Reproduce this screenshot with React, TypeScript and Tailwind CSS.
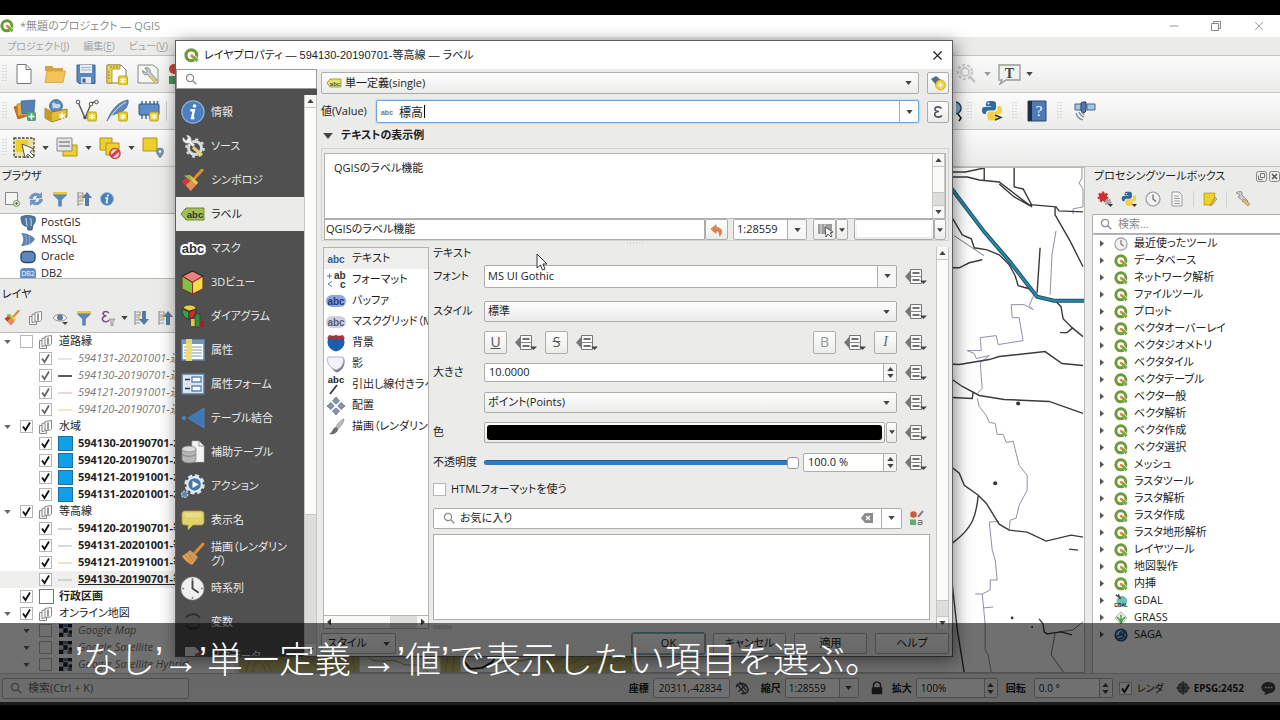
import { ReactNode, useState } from "react"
import { Minus, X } from "lucide-react"
import clsx from "clsx"

type Nodo = {
    nombre: string
    nivel: 0 | 1
    abierto?: boolean
    marcado?: boolean
    tenue?: boolean
    negrita?: boolean
    activo?: boolean
    icono: ReactNode
}

const Svg = ({ children, className = "size-4", box = "0 0 16 16" }: { children: ReactNode, className?: string, box?: string }) =>
    <svg viewBox={box} className={clsx("shrink-0", className)} fill="none" aria-hidden="true">{children}</svg>

const Flecha = ({ className = "w-[7px] h-[4px]", color = "#444" }: { className?: string, color?: string }) =>
    <Svg box="0 0 8 5" className={className}><path d="M0 0h8L4 5z" fill={color} /></Svg>

const FlechaArriba = ({ className = "w-[7px] h-[4px]" }: { className?: string }) =>
    <Svg box="0 0 8 5" className={className}><path d="M0 5h8L4 0z" fill="#444" /></Svg>

const Asa = () => <Svg box="0 0 5 18" className="w-[5px] h-[18px]">
    <path d="M1 0v18M4 0v18" stroke="#b9bab9" strokeDasharray="1 2" />
</Svg>

const Lupa = ({ className = "size-3" }: { className?: string }) => <Svg box="0 0 12 12" className={className}>
    <circle cx="5" cy="5" r="3.6" stroke="#888" strokeWidth="1.2" />
    <path d="M7.7 7.7L11.3 11.3" stroke="#888" strokeWidth="1.3" />
</Svg>

const LogoQ = ({ className = "size-[14px]" }: { className?: string }) => <Svg box="0 0 16 16" className={className}>
    <circle cx="7.8" cy="7.8" r="5.7" stroke="#6d9a3a" strokeWidth="3.5" />
    <path d="M7 7h4l5 5v4h-3z" fill="#f4f7ef" />
    <path d="M8 8l3.2.3 4.3 4.3-2.2 2.4-5-5z" fill="#7ba843" />
    <circle cx="8.3" cy="8.3" r="1.7" fill="#e5883c" />
</Svg>

const Reloj = ({ className }: { className?: string }) => <Svg className={className}>
    <circle cx="8" cy="8" r="7" fill="#f1f1f1" stroke="#999" strokeWidth="1.2" />
    <path d="M8 3.5V8l3 2.5" stroke="#666" strokeWidth="1.2" />
</Svg>

const Embudo = () => <Svg>
    <path d="M1 1h14v3L9.8 9v6.5H6.2V9L1 4z" fill="#5f87b5" />
    <path d="M1 1h14v2.5H1z" fill="#e9c940" />
</Svg>

const Info = ({ className }: { className?: string }) => <Svg className={className}>
    <circle cx="8" cy="8" r="7.4" fill="#4a7fc0" stroke="#8fb2dd" strokeWidth=".8" />
    <circle cx="9" cy="4" r="1.2" fill="#fff" />
    <path d="M6.2 6.8h2.4L7.4 12h1.5" stroke="#fff" strokeWidth="1.6" />
</Svg>

const Python = ({ children, className }: { children?: ReactNode, className?: string }) => <Svg box="0 0 22 22" className={className}>
    <path d="M5 7V3.5C5 1.5 7 1 10 1s5 .5 5 2.5V8c0 1.6-1 2.5-2.5 2.5h-5C6 10.5 5 11.5 5 13v1H3.5C1.5 14 1 12 1 10s.5-3 2.5-3H10V6.3H5z" fill="#2f6a9c" />
    <path d="M16.5 6H18c2 0 3 1.5 3 4s-.5 4-3 4h-6v.7h4.5V18c0 2-2.500 2.500-5 2.500S6.500 20 6.500 18v-4c0-1.600 1-2.500 2.500-2.500h5c1.500 0 2.500-1 2.500-2.500z" fill="#f6cf46" />
    <circle cx="7.5" cy="3.6" r="1" fill="#fff" />
    {children}
</Svg>

const Brocha = ({ className }: { className?: string }) => <Svg box="0 0 24 24" className={className}>
    <path d="M22 1l-8 9" stroke="#dd8b35" strokeWidth="3.2" strokeLinecap="round" />
    <path d="M9 6l9 8-2.500 3-9.500-8z" fill="#e9c443" />
    <path d="M6 9l9.500 8-5 6L1 13z" fill="#d8483a" />
    <path d="M6 9l-5 4 4 4 5-4.500z" fill="#cf3730" />
    <path d="M10 12.500L5 17l5 6 5.500-6z" fill="#e88d5a" />
    <path d="M9 6L3 7l3 2 7 6z" fill="#8db646" />
</Svg>

const Estrella = () => <g>
    <rect x="12.5" y="13" width="9" height="9" rx="1.5" fill="#e8c930" stroke="#b89b1c" strokeWidth=".8" />
    <path d="M17 14.500v6M14.200 16l5.600 3M19.800 16l-5.600 3" stroke="#fff" strokeWidth="1.3" />
</g>

// ツールバー(ファイル)
const iconosArchivo = [
    <Svg box="0 0 22 22" className="size-[22px]"><path d="M4 1.500h9l5 5v14H4z" fill="#fff" stroke="#777" /><path d="M13 1.500v5h5" stroke="#777" /></Svg>,
    <Svg box="0 0 22 22" className="size-[22px]"><path d="M1 3h7l2 2h9v3H1z" fill="#d9a33c" /><path d="M3 8h18.500l-2.500 11.500H1z" fill="#f2c45a" stroke="#d6a03a" strokeWidth=".8" /></Svg>,
    <Svg box="0 0 22 22" className="size-[22px]"><path d="M2 2h18v18.500H4L2 18.500z" fill="#5b86bd" stroke="#3c6190" /><path d="M5 2h12v8H5z" fill="#e8edf3" /><path d="M6 4.500h10M6 7h10" stroke="#a9b5c4" /><path d="M6 14h10v6.500H6z" fill="#dfe6ee" /><path d="M7.500 15.500h3v4h-3z" fill="#3c6190" /></Svg>,
    <Svg box="0 0 22 22" className="size-[22px]"><path d="M1 2h14l5 5v13H1z" fill="#fff" stroke="#777" /><path d="M1 2h13v4H6v14H1z" fill="#f0d34e" stroke="#a58e2a" strokeWidth=".8" /><path d="M5 3v2M8 3v2M11 3v2M2 9h2M2 12h2M2 15h2" stroke="#7c6a1e" strokeWidth=".8" /><Estrella /></Svg>,
    <Svg box="0 0 22 22" className="size-[22px]"><path d="M1 2h15l5 4v14H1z" fill="#f5f6f6" stroke="#888" /><path d="M8 5c3-1 6 1 5 4l7 8-2.500 2.500-7-8c-3 1-5-1-5-4l3 2 2-1z" fill="#c9ced2" stroke="#6c757c" strokeWidth=".8" /><path d="M14 13l5.500 5-2 2-5-5.500z" fill="#e5c94b" /></Svg>,
]

// ツールバー(データソース)
const iconosDatos = [
    <Svg box="0 0 24 24" className="size-[24px]"><path d="M1 8l9-3 4 12-9 3z" fill="#d0702d" stroke="#9d4f1b" strokeWidth=".7" /><path d="M4 5l11-1 1 12-11 1z" fill="#e6b23c" stroke="#a67d22" strokeWidth=".7" /><path d="M8 2l14-1-1 13-12 1z" fill="#5580b3" stroke="#39608f" strokeWidth=".7" /><rect x="14" y="13" width="9" height="9" rx="1.5" fill="#55a477" /><path d="M18.500 14.500v6M15.500 17.500h6" stroke="#fff" strokeWidth="1.5" /></Svg>,
    <Svg box="0 0 24 24" className="size-[24px]"><circle cx="12" cy="7" r="6.3" fill="#5b8fc4" stroke="#365b84" /><path d="M8 4c3-2 3 2 6 1s3 3 1 4-5-1-6 1" fill="#c5dbe9" /><path d="M1 9l7 4 15-3v8l-15 5-7-4z" fill="#e5bf3b" stroke="#8b6d16" strokeWidth=".8" /><path d="M1 9l7 4v10l-7-4z" fill="#c59b25" /><path d="M18 13.500v7M15 15.300l6 3.500M21 15.300l-6 3.500" stroke="#fff" strokeWidth="1.3" /></Svg>,
    <Svg box="0 0 24 24" className="size-[24px]"><path d="M3 3l7 16L16 5c1-2 3-2 5-2" stroke="#555" strokeWidth="1.4" /><circle cx="3" cy="3" r="1.8" fill="#fff" stroke="#555" /><circle cx="16" cy="5" r="1.8" fill="#fff" stroke="#555" /><circle cx="21.5" cy="3" r="1.8" fill="#fff" stroke="#555" /><circle cx="10" cy="18.5" r="1.8" fill="#555" /><Estrella /></Svg>,
    <Svg box="0 0 24 24" className="size-[24px]"><path d="M1 22C5 12 11 3 22 1c1 5-3 11-9 13-3 1-6 1-8 3z" fill="#6288b8" stroke="#43658f" strokeWidth=".8" /><path d="M2 22C7 13 13 7 20 3" stroke="#dbe6f2" /><Estrella /></Svg>,
    <Svg box="0 0 24 24" className="size-[24px]"><path d="M5 2v18M9 2v18M13 2v18M17 2v18M20.500 2v16" stroke="#56779f" strokeWidth="1.6" /><rect x="2" y="5" width="20" height="11" rx="1" fill="#5a8cc9" stroke="#34577f" /><Estrella /></Svg>,
]

// ツールバー(選択)
const iconosSeleccion = [
    <Svg box="0 0 24 24" className="size-[24px]"><path d="M2 2h20v19H2z" fill="#e9e0a8" stroke="#444" strokeWidth="1.3" strokeDasharray="2.5 1.5" /><path d="M4 4h12v12H4z" fill="#efcf29" /><path d="M10 8l3 14 3-4 4 4 2-2-4-4 4-3z" fill="#fff" stroke="#555" /></Svg>,
    <Svg box="0 0 24 24" className="size-[24px]"><path d="M8 9h14v11H8z" fill="#efcf29" stroke="#ab9224" /><path d="M2 2h15v13H2z" fill="#e4e5e6" stroke="#8a8c8e" /><path d="M4 6h11M4 10h11" stroke="#8a8c8e" strokeWidth="1.6" /></Svg>,
    <Svg box="0 0 24 24" className="size-[24px]"><path d="M2 2h12v12H2z" fill="#efcf29" stroke="#ab9224" /><path d="M8 7h13v12H8z" fill="#efcf29" stroke="#ab9224" /><circle cx="17" cy="17.5" r="5" fill="#f6d8d8" stroke="#cd4747" strokeWidth="1.6" /><path d="M13.500 20.500l7-6" stroke="#cd4747" strokeWidth="3" /></Svg>,
    <Svg box="0 0 24 24" className="size-[24px]"><path d="M2 2h14v13H2z" fill="#efcf29" stroke="#ab9224" /><path d="M19 22c-3-4-3.500-5-3.500-6.500a3.500 3.500 0 017 0C22.500 17 22 18 19 22z" fill="#7f93a8" stroke="#5d7084" strokeWidth=".7" /><circle cx="19" cy="15.5" r="1.2" fill="#fff" /></Svg>,
]

const Agregar = () => <Svg><path d="M1.500 1.500h12v12h-12z" fill="#f5f5f5" stroke="#888" /><circle cx="12.5" cy="12.5" r="3" fill="#dfe9d8" stroke="#6f8f63" /><path d="M12.500 11v3M11 12.500h3" stroke="#55784a" /></Svg>
const Recargar = () => <Svg><path d="M1.500 7.500C2 3 8 .5 12 3.500l1.500-2V7H8l2-2C7.500 3.500 5 5 4.500 7.500z" fill="#6d98cc" stroke="#4475ad" strokeWidth=".5" /><path d="M14.500 8.500c-.5 4.500-6.500 7-10.500 4l-1.500 2V9H8l-2 2c2.500 1.500 5 0 5.500-2.500z" fill="#6d98cc" stroke="#4475ad" strokeWidth=".5" /></Svg>
const Plegar = ({ abajo }: { abajo?: boolean }) => <Svg>
    <path d="M2 2h5v3H2zM2 7h5M2 10h5M2 13h5M2 1v14" stroke="#999" strokeWidth="1.2" />
    <path d="M4 5h4M4 9h4" stroke="#dcae45" />
    <path d={abajo ? "M9 1h4v8h3l-5 6-5-6h3z" : "M9 15h4V7h3l-5-6-5 6h3z"} fill="#56799f" />
</Svg>

const iconosBrowser = [<Agregar />, <Recargar />, <Embudo />, <Plegar />, <Info className="size-[14px]" />]

const Capas = () => <Svg>
    <path d="M1.500 6.500v8h7v-8z" fill="#f3f3f3" stroke="#888" />
    <path d="M4 4.500v8l7-1.500V3z" fill="#f7f7f7" stroke="#888" />
    <path d="M7 2.500v8.500c3 1 6 0 6.500-1V1.500z" fill="#fff" stroke="#888" />
    <path d="M10 3.500v7" stroke="#777" strokeWidth="1.5" />
</Svg>

const Linea = ({ color, grosor = 1 }: { color: string, grosor?: number }) =>
    <Svg className="w-[14px] h-4" box="0 0 14 16"><path d="M0 8h14" stroke={color} strokeWidth={grosor} /></Svg>

const Agua = () => <span className="w-[15px] h-[15px] bg-[#119fea] border border-[#1c6f9e] shrink-0" />

const Mosaico = () => <Svg className="size-[13px]" box="0 0 12 12">
    <path d="M0 0h12v12H0z" fill="#c7cfd8" />
    <path d="M0 0h4v4H0zM8 0h4v3H8zM4 4h4v4H4zM0 8h4v4H0zM9 6h3v3H9z" fill="#17202c" />
    <path d="M4 0h4v3H4zM8 9h4v3H8z" fill="#5c6d85" />
</Svg>

const nodos: Nodo[] = [
    { nombre: "道路縁", nivel: 0, abierto: true, icono: <Capas /> },
    { nombre: "594131-20201001-道路縁", nivel: 1, marcado: true, tenue: true, icono: <Linea color="#ccc" /> },
    { nombre: "594130-20190701-道路縁", nivel: 1, marcado: true, tenue: true, icono: <Linea color="#333" grosor={1.6} /> },
    { nombre: "594121-20191001-道路縁", nivel: 1, marcado: true, tenue: true, icono: <Linea color="#cbb5b0" /> },
    { nombre: "594120-20190701-道路縁", nivel: 1, marcado: true, tenue: true, icono: <Linea color="#dcd393" /> },
    { nombre: "水域", nivel: 0, abierto: true, marcado: true, icono: <Capas /> },
    { nombre: "594130-20190701-水域", nivel: 1, marcado: true, negrita: true, icono: <Agua /> },
    { nombre: "594120-20190701-水域", nivel: 1, marcado: true, negrita: true, icono: <Agua /> },
    { nombre: "594121-20191001-水域", nivel: 1, marcado: true, negrita: true, icono: <Agua /> },
    { nombre: "594131-20201001-水域", nivel: 1, marcado: true, negrita: true, icono: <Agua /> },
    { nombre: "等高線", nivel: 0, abierto: true, marcado: true, icono: <Capas /> },
    { nombre: "594120-20190701-等高線", nivel: 1, marcado: true, negrita: true, icono: <Linea color="#aaa" /> },
    { nombre: "594131-20201001-等高線", nivel: 1, marcado: true, negrita: true, icono: <Linea color="#b3b3c4" /> },
    { nombre: "594121-20191001-等高線", nivel: 1, marcado: true, negrita: true, icono: <Linea color="#e8c88a" /> },
    { nombre: "594130-20190701-等高線", nivel: 1, marcado: true, negrita: true, activo: true, icono: <Linea color="#b5b5b5" /> },
    { nombre: "行政区画", nivel: 0, marcado: true, negrita: true, icono: <span className="size-[15px] bg-white border border-[#777] shrink-0" /> },
    { nombre: "オンライン地図", nivel: 0, abierto: true, marcado: true, icono: <Capas /> },
    { nombre: "Google Map", nivel: 1, abierto: true, tenue: true, icono: <Mosaico /> },
    { nombre: "Google Satellite", nivel: 1, abierto: true, tenue: true, icono: <Mosaico /> },
    { nombre: "Google Satellite Hybrid", nivel: 1, abierto: true, tenue: true, icono: <Mosaico /> },
]

const bases = [
    { nombre: "PostGIS", icono: <Svg><path d="M1 2c3-2 10-2 14 0 1 3 0 6-2 8l-1 5H8l-1-4c-3 1-6-2-6-9z" fill="#4f78a8" stroke="#2f4f78" strokeWidth=".8" /><path d="M6 3c0 4 1 5 1 8M10 3c2 2 1 5 1 8" stroke="#d7e2ee" /></Svg> },
    { nombre: "MSSQL", icono: <Svg><path d="M1 1c6 0 12 3 14 6-3 5-8 7-14 7 3-4 3-9 0-13z" fill="#5f83ad" /><path d="M5 3c2 3 2 7 0 10M9 4c1 3 1 5 0 8" stroke="#8fa9c8" /></Svg> },
    { nombre: "Oracle", icono: <Svg><rect x="1" y="2.5" width="14" height="11" rx="4" fill="#5b88bd" stroke="#2c4668" strokeWidth="1.4" /></Svg> },
    { nombre: "DB2", icono: <span className="w-4 h-3 rounded-sm bg-[#5d8fc6] text-white text-[7px] leading-3 text-center shrink-0">DB2</span> },
]

const algoritmos: { nombre: string, icono?: ReactNode }[] = [
    { nombre: "最近使ったツール", icono: <Reloj className="size-[14px]" /> },
    { nombre: "データベース" },
    { nombre: "ネットワーク解析" },
    { nombre: "ファイルツール" },
    { nombre: "プロット" },
    { nombre: "ベクタオーバーレイ" },
    { nombre: "ベクタジオメトリ" },
    { nombre: "ベクタタイル" },
    { nombre: "ベクタテーブル" },
    { nombre: "ベクタ一般" },
    { nombre: "ベクタ解析" },
    { nombre: "ベクタ作成" },
    { nombre: "ベクタ選択" },
    { nombre: "メッシュ" },
    { nombre: "ラスタツール" },
    { nombre: "ラスタ解析" },
    { nombre: "ラスタ作成" },
    { nombre: "ラスタ地形解析" },
    { nombre: "レイヤツール" },
    { nombre: "地図製作" },
    { nombre: "内挿" },
    { nombre: "GDAL", icono: <Svg className="size-[14px]"><circle cx="9" cy="8" r="6" fill="#6cc0b4" /><path d="M2 1l6 4M5 0l2 6" stroke="#444" strokeWidth="1.4" /><text x="8" y="15" fontSize="5.5" fontWeight="bold" textAnchor="middle" fill="#123" fontFamily="Liberation Sans">GDAL</text></Svg> },
    { nombre: "GRASS", icono: <Svg className="size-[14px]"><path d="M8 1l7 7-7 7-7-7z" fill="#edf4ea" stroke="#9ab592" /><path d="M8 14C7 10 5 8 3 7M8 14c0-5 0-7 0-10M8 14c1-4 3-6 5-7" stroke="#4b9a4b" strokeWidth="1.7" /></Svg> },
    { nombre: "SAGA", icono: <Svg className="size-[14px]"><circle cx="8" cy="8" r="6.5" fill="#c5d8ea" stroke="#24568c" strokeWidth="2" /><path d="M12 4C7 4 4 8 9 8s3 4-4 4M2 10l12-5" stroke="#24568c" strokeWidth="1.6" /></Svg> },
]

const Abc = ({ fondo, trazo }: { fondo: string, trazo: string }) => <Svg box="0 0 20 16" className="w-5 h-4">
    <rect x="0" y="2" width="20" height="12" rx="6" fill={fondo} />
    <text x="10" y="11.5" fontSize="10" fontWeight="bold" textAnchor="middle" fill={trazo} fontFamily="Liberation Sans">abc</text>
</Svg>

const secciones: { nombre: string, icono: ReactNode }[] = [
    { nombre: "情報", icono: <Info className="size-[24px]" /> },
    { nombre: "ソース", icono: <Svg box="0 0 24 24" className="size-[24px]"><circle cx="14" cy="14" r="6.5" stroke="#d8dadb" strokeWidth="3" /><circle cx="14" cy="14" r="8.8" stroke="#d8dadb" strokeWidth="2" strokeDasharray="3 3.9" /><path d="M2 3a4.500 4.500 0 006 6l4 4 2-2-4-4a4.500 4.500 0 00-5-6l2 3-2 2.500z" fill="#f2f2f2" stroke="#777" strokeWidth=".5" /><path d="M13 12l9 8-2 2.500-9-8z" fill="#e5cf72" /></Svg> },
    { nombre: "シンボロジ", icono: <Brocha className="size-[23px]" /> },
    { nombre: "ラベル", icono: <Svg box="0 0 26 16" className="w-[26px] h-4"><path d="M1 8l5-6h18v12H6z" fill="#a3bd53" stroke="#72893a" /><text x="15" y="11.5" fontSize="9.5" fontWeight="bold" textAnchor="middle" fill="#2b3a2b" fontFamily="Liberation Sans">abc</text></Svg> },
    { nombre: "マスク", icono: <Svg box="0 0 26 16" className="w-[26px] h-4"><text x="13" y="12.5" fontSize="13" fontWeight="bold" textAnchor="middle" fill="#333" stroke="#fff" strokeWidth="4" strokeLinejoin="round" paintOrder="stroke" fontFamily="Liberation Sans">abc</text></Svg> },
    { nombre: "3Dビュー", icono: <Svg box="0 0 24 24" className="size-[25px]"><path d="M12 1l10 5-10 6L2 6z" fill="#f08080" stroke="#222" /><path d="M2 6l10 6v11L2 18z" fill="#7fc241" stroke="#8a1c1c" strokeWidth=".8" /><path d="M22 6l-10 6v11l10-5z" fill="#f2dd4b" stroke="#8a1c1c" strokeWidth=".8" /></Svg> },
    { nombre: "ダイアグラム", icono: <Svg box="0 0 24 24" className="size-[24px]"><path d="M8 1c5 0 7 2 7 4l-7 2-6-3c1-2 3-3 6-3z" fill="#edcd3a" stroke="#222" strokeWidth=".6" /><path d="M1 5l7 3v7C3 14 1 10 1 5z" fill="#37a04a" stroke="#222" strokeWidth=".6" /><path d="M8 8l7-3c0 5-2 9-7 10z" fill="#cc2d2a" stroke="#222" strokeWidth=".6" /><path d="M10 15h4v7h-4z" fill="#e5c53a" /><path d="M14 10h5v13h-5z" fill="#318f43" stroke="#173f1f" strokeWidth=".6" /><path d="M19 17h4v6h-4z" fill="#a7201f" /></Svg> },
    { nombre: "属性", icono: <Svg box="0 0 24 24" className="size-[24px]"><path d="M1 2h22v20H1z" fill="#fff" stroke="#5d88b7" strokeWidth="1.5" /><path d="M1 2h22v4H1z" fill="#6f98c5" /><path d="M3 9h18M3 12h18M3 15h18M3 18h18" stroke="#8497ab" strokeWidth="1.2" /><path d="M5 1h6v22H5z" fill="#eddc6e" fillOpacity=".9" /></Svg> },
    { nombre: "属性フォーム", icono: <Svg box="0 0 24 24" className="size-[24px]"><path d="M1 2h22v20H1z" fill="#dce6f1" stroke="#5b7796" strokeWidth="1.5" /><path d="M11 5h9v5h-9zM11 14h9v5h-9z" fill="#fff" stroke="#5b86bd" strokeWidth="1.4" /><path d="M4 7.500h5M4 16.500h5" stroke="#333" strokeWidth="1.6" /></Svg> },
    { nombre: "テーブル結合", icono: <Svg box="0 0 24 24" className="size-[24px]"><path d="M7 12L23 2v20z" fill="#3f78b8" stroke="#4f86c4" strokeWidth=".8" /><circle cx="3" cy="12" r="2" fill="#4b88c9" /></Svg> },
    { nombre: "補助テーブル", icono: <Svg box="0 0 24 24" className="size-[24px]"><path d="M11 1h7l5 5v16H11z" fill="#f4f4f4" stroke="#bbb" strokeWidth=".6" /><path d="M18 1v5h5" stroke="#999" /><path d="M1 9v11c2 4 12 4 14 0V9z" fill="#b4b6b7" stroke="#7f8182" strokeWidth=".7" /><ellipse cx="8" cy="9" rx="7" ry="3" fill="#d8dadb" stroke="#7f8182" strokeWidth=".7" /><path d="M1 14c2 3 12 3 14 0" stroke="#7f8182" /></Svg> },
    { nombre: "アクション", icono: <Svg box="0 0 24 24" className="size-[25px]"><circle cx="14" cy="10" r="8.5" stroke="#d7e1ec" strokeWidth="2.6" strokeDasharray="4 2.68" /><circle cx="14" cy="10" r="7" fill="#4577ab" stroke="#e5ebf1" strokeWidth="2" /><path d="M12 6.500l6 3.500-6 3.500z" fill="#fff" /><circle cx="4.5" cy="19.5" r="3" fill="#5a84b4" stroke="#b8cade" strokeWidth="1.2" strokeDasharray="2 1" /></Svg> },
    { nombre: "表示名", icono: <Svg box="0 0 24 24" className="size-[24px]"><path d="M4 3h16c2 0 3 1 3 3v8c0 2-1 3-3 3h-8l-5 5v-5H4c-2 0-3-1-3-3V6c0-2 1-3 3-3z" fill="#e0d36a" stroke="#a89b3c" strokeWidth=".8" /><path d="M4 5h16v4H4z" fill="#e9df88" /></Svg> },
    { nombre: "描画（レンダリング）", icono: <Svg box="0 0 24 24" className="size-[24px]"><path d="M22 2l-9 10" stroke="#dc8c34" strokeWidth="3" strokeLinecap="round" /><path d="M9 8l8 7-2 3-9-7z" fill="#c99b62" /><path d="M6 11l9 7-4 5c-4-2-8-5-10-9z" fill="#e5a052" /><path d="M4 13l7 8M8 13l5 7" stroke="#b97830" /></Svg> },
    { nombre: "時系列", icono: <Svg box="0 0 24 24" className="size-[25px]"><circle cx="12" cy="12" r="11" fill="#f0f0ee" stroke="#999" strokeDasharray="1 1" /><path d="M12 4v8l6 4" stroke="#444" strokeWidth="1.8" /><path d="M12 2v2M12 20v2M2 12h2M20 12h2" stroke="#888" strokeWidth="1.5" /></Svg> },
    { nombre: "変数", icono: <Svg box="0 0 24 24" className="size-[24px]"><path d="M5 8c3-5 11-5 14 0M19 15c-3 5-11 5-14 0" stroke="#2f3134" strokeWidth="2" /></Svg> },
    { nombre: "メタデータ", icono: <Svg box="0 0 24 24" className="size-[24px]"><path d="M4 3h10l4 4v14H4z" fill="#dedede" /><path d="M14 10l7-3v12l-7 2z" fill="#c55043" /></Svg> },
]

const opcionesTexto: { nombre: string, icono: ReactNode }[] = [
    { nombre: "テキスト", icono: <Svg box="0 0 20 16" className="w-5 h-4"><text x="10" y="12" fontSize="10" fontWeight="bold" textAnchor="middle" fill="#335f91" fontFamily="Liberation Sans">abc</text></Svg> },
    { nombre: "フォーマット", icono: <Svg box="0 0 20 18" className="w-5 h-[18px]"><text x="8" y="8" fontSize="10" fontWeight="bold" fill="#333" fontFamily="Liberation Sans">ab</text><text x="14" y="16.5" fontSize="10" fontWeight="bold" fill="#333" fontFamily="Liberation Sans">c</text><path d="M1 5h5M3.500 2.500v5M6 10.500l-4 2.500 4 2.500" stroke="#777" /></Svg> },
    { nombre: "バッファ", icono: <Abc fondo="#8ea4da" trazo="#1f3a7c" /> },
    { nombre: "マスクグリッド（Mask）", icono: <Abc fondo="#cfd2dc" trazo="#555c75" /> },
    { nombre: "背景", icono: <Svg box="0 0 20 18" className="w-5 h-[18px]"><path d="M2 5h16c2 6-2 11-8 12.500C4 16 0 11 2 5z" fill="#1a5fa8" /><path d="M1.500 5C1 3 3 2 3 1c3 1 5 1 7 0 2 1 4 1 7 0 0 1 2 2 1.500 4z" fill="#a83238" /></Svg> },
    { nombre: "影", icono: <Svg box="0 0 20 18" className="w-5 h-[18px]"><path d="M4 3h14c2 6-1 12-7 14.500C6 16 3 10 4 3z" fill="#777c8c" /><path d="M2 2h15c1.500 6-1 11-7 13C4 13 0 8 2 2z" fill="#f2f3fa" stroke="#b3b6c4" /></Svg> },
    { nombre: "引出し線付きラベル", icono: <Svg box="0 0 20 20" className="w-5 h-5"><text x="10" y="8" fontSize="9.5" fontWeight="bold" textAnchor="middle" fill="#222" fontFamily="Liberation Sans">abc</text><path d="M11 10L4 19" stroke="#333" strokeWidth="1.7" /></Svg> },
    { nombre: "配置", icono: <Svg box="0 0 20 20" className="w-5 h-5"><path d="M10 1l3.500 4L10 8 6.500 5zM10 19l3.500-4L10 12l-3.500 3zM1 10l4-3.500L8 10l-3 3.500zM19 10l-4-3.500L12 10l3 3.500z" fill="#8495ab" stroke="#54657d" strokeWidth=".7" /></Svg> },
    { nombre: "描画（レンダリング）", icono: <Svg box="0 0 20 20" className="w-5 h-5"><path d="M18 2c-2 0-7 5-8 8l2 2c3-3 6-7 6-10z" fill="#b9bdc1" stroke="#777" strokeWidth=".6" /><path d="M10 10c-4 1-3 5-7 7 4 1 9-1 9-5z" fill="#6b6f73" /></Svg> },
]

const Casilla = ({ marcado, tenue, label, children }: { marcado?: boolean, tenue?: boolean, label?: string, children?: ReactNode }) =>
    <label className="flex items-center gap-[5px] shrink-0">
        <span className="relative size-[13px] shrink-0">
            <input type="checkbox" aria-label={label} defaultChecked={marcado} className="peer block appearance-none size-[13px] bg-white border border-[#b5b6b5]" />
            <svg viewBox="0 0 13 13" fill="none" aria-hidden="true" className="absolute inset-0 size-[13px] hidden peer-checked:block pointer-events-none">
                <path d="M3 6.500l2.500 3.500L10 2.500" stroke={tenue ? "#666" : "#111"} strokeWidth="1.8" />
            </svg>
        </span>
        {children}
    </label>

const BotonIcono = ({ label, children, className }: { label: string, children: ReactNode, className?: string }) =>
    <button type="button" aria-label={label} className={clsx("flex items-center justify-center shrink-0", className)}>{children}</button>

const marco = "border border-[#adaeac] rounded-[2px] bg-linear-to-b from-[#fdfdfd] to-[#ebecea]"

// データ定義の上書きボタン
const Definido = ({ label }: { label: string }) => <BotonIcono label={`${label} データ定義`} className="w-[22px]">
    <Svg box="0 0 22 17" className="w-[22px] h-[17px]">
        <path d="M0 8.500L5 3v11z" fill="#777" />
        <path d="M5.500 1.500h11v14h-11z" fill="#fafafa" stroke="#777" />
        <path d="M5.500 8.500h11" stroke="#888" />
        <path d="M7.500 5h7M7.500 12h7" stroke="#444" strokeWidth="1.4" />
        <path d="M15 12.500h7l-3.500 3.500z" fill="#444" />
    </Svg>
</BotonIcono>

const Desplegable = ({ id, valor, className, blanco, children }: { id: string, valor: string, className?: string, blanco?: boolean, children?: ReactNode }) =>
    <div className={clsx("relative flex items-center rounded-[2px]", blanco ? "border border-[#adaeac] bg-white" : marco, className)}>
        {children}
        <select id={id} aria-label={id} className="appearance-none flex-1 min-w-0 self-stretch px-[3px] bg-transparent outline-none">
            <option>{valor}</option>
        </select>
        <span className={clsx("absolute right-0 inset-y-0 w-[19px] flex items-center justify-center pointer-events-none", blanco && "border-l border-[#adaeac] bg-[#f5f6f5]")}><Flecha /></span>
    </div>

const Numero = ({ id, valor, className }: { id: string, valor: string, className?: string }) =>
    <div className={clsx("flex items-stretch rounded-[2px] border border-[#adaeac] bg-white", className)}>
        <input id={id} aria-label={id} defaultValue={valor} className="flex-1 min-w-0 px-1 bg-transparent outline-none" />
        <span className="w-[13px] flex flex-col items-center justify-center gap-[3px] border-l border-[#adaeac] bg-[#f5f6f5]">
            <FlechaArriba /><Flecha />
        </span>
    </div>

const Barra = ({ pulgar, className }: { pulgar: string, className?: string }) =>
    <div className={clsx("flex flex-col w-[13px] shrink-0 border-x border-[#c6c7c5] bg-[#dddedc]", className)}>
        <span className="h-[13px] flex items-center justify-center bg-[#f8f8f7] border-b border-[#c6c7c5]"><FlechaArriba /></span>
        <span className={clsx("bg-[#fbfbfa] border-b border-[#c6c7c5]", pulgar)} />
        <span className="flex-1" />
        <span className="h-[13px] flex items-center justify-center bg-[#f8f8f7] border-t border-[#c6c7c5]"><Flecha /></span>
    </div>

const FilaBarra = ({ children, derecha }: { children: ReactNode, derecha?: ReactNode }) =>
    <div className="flex items-center h-[36px] box-content border-b border-[#c3c4c2] bg-linear-to-b from-[#fafbfa] to-[#ebecea]">
        <div className="flex items-center gap-[5px] pl-[2px] shrink-0">{children}</div>
        <div className="flex items-center ml-auto w-[324px]">{derecha}</div>
    </div>

const Herramientas = () => <div>
    <FilaBarra derecha={<>
        <BotonIcono label="検索"><Svg box="0 0 22 22" className="size-[22px]"><circle cx="9" cy="9" r="7" stroke="#ccc" strokeWidth="2.5" strokeDasharray="3 2" /><circle cx="9" cy="9" r="4" stroke="#c5c5c5" strokeWidth="1.5" /><path d="M13 13l6 6" stroke="#c5c5c5" strokeWidth="2.5" /></Svg></BotonIcono>
        <Flecha className="w-[7px] h-[4px] ml-[6px] mr-[6px]" color="#999" />
        <BotonIcono label="テキスト注記"><Svg box="0 0 24 22" className="w-6 h-[22px]"><path d="M2 2h21v15H9l-6 4 2-4H2z" fill="#eef3f2" stroke="#999" strokeWidth="1.3" /><text x="12.5" y="14.5" fontSize="14" fontWeight="bold" textAnchor="middle" fill="#444" fontFamily="Liberation Serif">T</text></Svg></BotonIcono>
        <Flecha className="w-[7px] h-[4px] ml-[5px]" />
    </>}>
        <Asa />
        <div className="flex gap-[9px] pl-px">{iconosArchivo.map((icono, i) => <BotonIcono key={i} label={`ファイル ${i + 1}`}>{icono}</BotonIcono>)}</div>
        <Svg box="0 0 16 22" className="w-4 h-[22px] ml-1"><circle cx="6" cy="6" r="5" fill="#c14b33" /><path d="M1 13h10v8H1z" fill="#4f8f63" /></Svg>
    </FilaBarra>
    <FilaBarra derecha={<>
        <Svg box="0 0 7 22" className="w-[7px] h-[22px] mr-1"><circle cx="-1" cy="8" r="6" fill="#7da7c9" stroke="#223c58" strokeWidth="1.5" /><path d="M2 14l3 4-2 3" stroke="#111" strokeWidth="1.5" /></Svg>
        <Asa />
        <BotonIcono label="Python" className="mx-[9px]"><Python className="size-[22px]"><path d="M14 15l6 2.500-6 2.500" stroke="#333" strokeWidth="1.4" /></Python></BotonIcono>
        <Asa />
        <BotonIcono label="ヘルプ" className="mx-[9px]"><Svg box="0 0 22 22" className="size-[22px]"><path d="M2 1h18v20H2z" fill="#4f7ab3" stroke="#2b486f" /><path d="M2 1h4v20H2z" fill="#1f2f44" /><text x="13" y="16" fontSize="15" textAnchor="middle" fill="#fff" fontFamily="Liberation Serif">?</text></Svg></BotonIcono>
        <Asa />
        <BotonIcono label="GPS" className="ml-3"><Svg box="0 0 22 22" className="size-[22px]"><path d="M1 4h7v6H1zM13 4h8v6h-8z" fill="#a9c3e3" stroke="#46648a" /><path d="M7 3l2-1h3v9l-2 2-3-2z" fill="#4f7ab3" stroke="#26405f" /><path d="M2 13c1 4 3 6 7 7M5 12c1 3 2 4 5 5M7.500 12c.5 1.500 1 2 3 2.500" stroke="#7a8591" strokeWidth="1.2" /></Svg></BotonIcono>
    </>}>
        <Asa />
        <div className="flex gap-[7px] pl-px">{iconosDatos.map((icono, i) => <BotonIcono key={i} label={`データソース ${i + 1}`}>{icono}</BotonIcono>)}</div>
        <span className="w-px h-5 bg-[#d0d1cf]" />
    </FilaBarra>
    <FilaBarra>
        <Asa />
        <div className="flex items-center gap-[6px]">
            {iconosSeleccion.map((icono, i) => <div key={i} className="flex items-center gap-[6px]">
                <BotonIcono label={`選択 ${i + 1}`}>{icono}</BotonIcono>
                {i < 3 && <Flecha />}
            </div>)}
        </div>
    </FilaBarra>
</div>

const PanelIzquierdo = () => <aside className="w-[234px] shrink-0 flex flex-col min-h-0">
    <h2 className="h-5 shrink-0 px-[2px] leading-[18px] text-[#222]">ブラウザ</h2>
    <div className="h-[26px] shrink-0 flex items-center gap-2 px-1 pb-[2px]">
        {iconosBrowser.map((icono, i) => <BotonIcono key={i} label={`ブラウザ ${i + 1}`}>{icono}</BotonIcono>)}
    </div>
    <ul className="h-[66px] shrink-0 overflow-hidden bg-white border-y border-[#b9bab8] pl-5 text-[#222]">
        {bases.map(base => <li key={base.nombre} className="h-[17px] flex items-center gap-[5px]">{base.icono}{base.nombre}</li>)}
    </ul>
    <h2 className="h-[26px] shrink-0 px-[2px] pt-1 leading-[22px] text-[#222]">レイヤ</h2>
    <div className="h-[27px] shrink-0 flex items-center gap-2 px-1 pb-[2px]">
        <BotonIcono label="スタイル"><Brocha className="size-4" /></BotonIcono>
        <BotonIcono label="グループ追加"><Capas /></BotonIcono>
        <BotonIcono label="表示"><Svg><path d="M1 8c3-5 11-5 14 0-3 4-11 4-14 0z" fill="#f5f5f5" stroke="#999" /><circle cx="8" cy="7.5" r="3" fill="#5f7c9c" /><path d="M10 12h6l-3 3z" fill="#444" /></Svg></BotonIcono>
        <BotonIcono label="フィルタ"><Embudo /></BotonIcono>
        <BotonIcono label="式フィルタ"><Svg><path d="M9 3C6 0 2 2 3.500 4.500 4 5.500 5 6 6.500 6 3 6 1.500 8.500 3 10.500S8 12 9 10" stroke="#7c4f86" strokeWidth="1.6" /><path d="M9 9h6l-2 3v4h-2v-4z" fill="#ccc" stroke="#888" strokeWidth=".7" /></Svg></BotonIcono>
        <Flecha className="w-[7px] h-[4px] mx-[-3px]" />
        <BotonIcono label="展開"><Plegar abajo /></BotonIcono>
        <BotonIcono label="折りたたみ"><Plegar /></BotonIcono>
    </div>
    <ul className="flex-1 min-h-0 overflow-hidden bg-white border-t border-[#b9bab8] text-[#222]">
        {nodos.map(nodo => <li key={nodo.nombre} className={clsx("h-[17px] flex items-center whitespace-nowrap", nodo.nivel === 1 && "pl-[19px]", nodo.activo && "bg-[#efefee]")}>
            <span className="w-5 pl-1 shrink-0">{nodo.abierto && <Flecha className="w-[7px] h-[4px]" color="#666" />}</span>
            <Casilla marcado={nodo.marcado} tenue={nodo.tenue} label={nodo.nombre} />
            <span className="w-4 ml-[5px] mr-[5px] flex justify-center shrink-0">{nodo.icono}</span>
            <span className={clsx(nodo.tenue && "italic text-[#777]", nodo.negrita && "font-bold", nodo.activo && "underline")}>{nodo.nombre}</span>
        </li>)}
    </ul>
</aside>

const Mapa = () => <main className="flex-1 min-w-0 bg-white border border-[#b9bab8] overflow-hidden">
    <svg viewBox="239 167 846 506" preserveAspectRatio="xMaxYMin slice" className="block size-full" fill="none" role="img" aria-label="地図">
        <g stroke="#8f8fa8" strokeWidth="1">
            <path d="M1083 167v10l-3 5 4 6v18l-10 2v5M1057 230l-4 23-2 41M1035 294l-5 11 4 4-9-5h-13l1 13h7l4 23-25 4-2-9-16 2 1 13h-14l7 3 2 5 13-3-9 7 1 14 1 12-5 5M978 398l2 8 7 9 3 7 6 1 2 11h6l3 8 7-1 6 24 8 10v15l-8 15-3 13-6 2-1 10M1000 521l-10 1 3 28 3 10 2 20h-7v10l-8 4h-7M983 594l3 31v25l3 5 3 18M984 608l10-1" />
            <path d="M1056 634l-4 21 13 18M1060 632l14-2 10-8M955 235l18 12 12 8" stroke="#777" />
        </g>
        <g stroke="#3a3a3a" strokeWidth="1.4">
            <path d="M940 171h26l19-4v12M940 176h28l12 3 20 2 30 23h4l23 2 3 4 24 1M1015 167v19l9 2 9 17M1000 183l15 13 18 10M1056 206v8l15 26 13 26" />
            <path d="M953 217l10 17 9 4 3 9 13 2 12 5 10 10 6 11 3 10 11 3 7 7M953 267h7l10-5 13-3M1041 247l-3 45M1056 300l6 6 2 12 9 9 11 9M1061 332h7l6-5" />
            <path d="M940 363l20 1 30-5 10-3 46-5 17 12 21 2M940 370l23 16 17 9 25 4 45 2 34 12M953 397l20 1 1-7" />
            <path d="M940 457l20 16 5 12 14 10 8 8 13 21 10 6 18 2 19 9 25-6 12 2M979 495c-2 20-5 33-26 48M1070 549l9 1M1040 619l4 5 1 8 3 2 14-2 11 3M953 585l5 45 7 43" />
        </g>
        <circle cx="1019" cy="403" r="2" fill="#333" />
        <circle cx="996" cy="483" r="2" fill="#333" />
        <circle cx="1013" cy="618" r="1.4" fill="#333" />
        <circle cx="1033" cy="627" r="1" fill="#333" />
        <path d="M948 182l37 49 25 29 17 22 11 14 17 4h30" stroke="#1d4f66" strokeWidth="4" />
        <path d="M948 182l37 49 25 29 17 22 11 14 17 4h30" stroke="#2a8bad" strokeWidth="2" />
        <path d="M239 655h120v18H239zM440 655h20v18h-20zM540 655h92v18h-92z" fill="#c9c27c" />
        <g stroke="#a59d4a" strokeWidth="1">
            <path d="M245 673c4-24 20-20 26 0M251 673c3-16 11-14 14 0M278 655c8 10 14 12 16 18M290 655c12 6 24 5 30 18M305 655c5 9 20 4 26 18M340 655c-8 6 4 12-4 18M355 655c-8 6 4 12-4 18M368 658c10 8 22-2 34 6 8 4 16-4 26 9" />
            <path d="M445 655c6 6-4 12 2 18M452 655c6 6-4 12 2 18M470 673c20-14 40-8 60-14M545 673c4-14 18-14 24-18M556 673c4-10 22-8 28-18M570 673c8-12 26-4 34-18M590 673c8-8 22-4 34-18M632 655c-6 6 6 12 0 18" />
        </g>
        <path d="M463 661l7 8 12-1 10-6 4-7" stroke="#222" strokeWidth="1.8" />
    </svg>
</main>

const PanelDerecho = () => <aside className="w-[195px] shrink-0 flex flex-col min-h-0 pl-[7px]">
    <div className="h-5 shrink-0 flex items-center pb-[2px] text-[#222]">
        <h2 className="flex-1 pl-[2px]">プロセシングツールボックス</h2>
        <button type="button" aria-label="切り離し" className="mr-[2px]"><Svg box="0 0 11 11" className="size-[11px]"><rect x=".5" y=".5" width="10" height="10" rx="2" stroke="#888" /><path d="M4.500 2.500h4v4h-4zM2.500 4.500v4h4" stroke="#777" /></Svg></button>
        <button type="button" aria-label="閉じる"><Svg box="0 0 11 11" className="size-[11px]"><rect x=".5" y=".5" width="10" height="10" rx="2" stroke="#888" /><path d="M3 3l5 5M8 3l-5 5" stroke="#555" strokeWidth="1.5" /></Svg></button>
    </div>
    <div className="h-[27px] shrink-0 flex items-center gap-2 pl-[5px] pb-[3px]">
        <BotonIcono label="モデル"><Svg><circle cx="6" cy="6" r="4" fill="#cf2f33" stroke="#cf2f33" strokeWidth="3" strokeDasharray="2 1.5" /><circle cx="11" cy="11" r="2.5" fill="#aaa" stroke="#999" strokeWidth="2" strokeDasharray="1.5 1" /><path d="M11 13h5l-2.500 3z" fill="#333" /></Svg></BotonIcono>
        <BotonIcono label="スクリプト"><Python className="size-4"><path d="M15 18h7l-3.500 4z" fill="#333" /></Python></BotonIcono>
        <BotonIcono label="履歴"><Reloj /></BotonIcono>
        <BotonIcono label="結果"><Svg><path d="M3 1h7l3 3v11H3z" fill="#f7f7f7" stroke="#999" /><path d="M5 5h5M5 7.500h6M5 10h6M5 12.500h6" stroke="#999" /></Svg></BotonIcono>
        <span className="w-px h-4 bg-[#d3d4d2]" />
        <BotonIcono label="編集"><Svg><path d="M2 2h11l-1 8-3 4H2z" fill="#efcf29" stroke="#b3982a" strokeWidth=".8" /><path d="M13 6l2 2-5 6-2 1z" fill="#d8bd57" stroke="#8f7d32" strokeWidth=".6" /></Svg></BotonIcono>
        <span className="w-px h-4 bg-[#d3d4d2]" />
        <BotonIcono label="オプション"><Svg><path d="M1 2l3 1 1 2-2 1 8 6 2-2-6-6 0-3-3-1z" fill="#ccc" stroke="#888" strokeWidth=".8" /><path d="M9 8l6 5-2 2-6-5z" fill="#d9c074" stroke="#8f7d42" strokeWidth=".6" /></Svg></BotonIcono>
    </div>
    <label className="h-5 shrink-0 flex items-center gap-[6px] px-[7px] bg-white border border-r-0 border-[#adaeac] rounded-l-[2px]">
        <Lupa />
        <input type="search" placeholder="検索…" className="min-w-0 flex-1 bg-transparent outline-none placeholder:text-[#888]" />
    </label>
    <ul className="flex-1 min-h-0 overflow-hidden bg-white border-l border-t border-[#b9bab8] text-[#222]">
        {algoritmos.map(alg => <li key={alg.nombre} className="h-[17px] flex items-center pl-[7px]">
            <Svg box="0 0 5 8" className="w-[4px] h-[7px]"><path d="M0 0l5 4-5 4z" fill="#555" /></Svg>
            <span className="ml-[10px] mr-[6px]">{alg.icono ?? <LogoQ />}</span>
            {alg.nombre}
        </li>)}
    </ul>
</aside>

const BarraEstado = () => <footer className="h-[29px] shrink-0 flex items-center px-[2px] bg-[#ebecea] border-t border-[#c6c7c5] text-[10px] text-[#222]">
    <label className="w-[187px] h-[21px] flex items-center gap-[6px] px-[7px] bg-[#f6f6f5] border border-[#adaeac] rounded-[2px] text-[11px]">
        <Lupa />
        <input type="search" placeholder="検索(Ctrl + K)" className="min-w-0 flex-1 bg-transparent outline-none placeholder:text-[#666]" />
    </label>
    <div className="ml-auto flex items-center">
        <label htmlFor="coord" className="font-bold">座標</label>
        <input id="coord" defaultValue="20311,-42834" className="ml-1 w-[77px] h-5 px-[5px] bg-white border border-[#adaeac] rounded-[2px]" />
        <Svg className="size-[14px] ml-[5px] mr-3"><path d="M2 3l9 11M5 1l8 10M1 7c4-6 10-5 13 0s-2 9-7 7M4 12l9-8" stroke="#444" strokeWidth="1.5" /></Svg>
        <label htmlFor="escala" className="font-bold mr-1">縮尺</label>
        <Desplegable id="escala" valor="1:28559" blanco className="w-[74px] h-5" />
        <Svg className="size-[14px] ml-[11px] mr-2"><path d="M4 8V5c0-5 8-5 8 0v3" stroke="#333" strokeWidth="1.6" /><rect x="2" y="7" width="12" height="8" rx="1" fill="#333" /></Svg>
        <label htmlFor="lupa" className="font-bold mr-1">拡大</label>
        <Numero id="lupa" valor="100%" className="w-[82px] h-5" />
        <label htmlFor="rotacion" className="font-bold ml-[8px] mr-[8px]">回転</label>
        <Numero id="rotacion" valor="0.0 °" className="w-[79px] h-5 mr-[6px]" />
        <Casilla marcado>レンダ</Casilla>
        <button type="button" className="ml-3 flex items-center gap-1 font-bold">
            <Svg className="size-[14px]"><circle cx="8" cy="8" r="6" fill="#888" stroke="#444" /><path d="M0 8h16M8 0v16M3 4c3 2 7 2 10 0M3 12c3-2 7-2 10 0" stroke="#333" /></Svg>
            EPSG:2452
        </button>
        <BotonIcono label="メッセージ" className="ml-[17px] mr-[2px]"><Svg className="size-[15px]"><path d="M8 1c9 0 10 11 1 12l-5 2v-3C-2 9 0 1 8 1z" fill="#444" /><path d="M4 7h2M7 7h2M10 7h2" stroke="#ddd" strokeWidth="1.6" /></Svg></BotonIcono>
    </div>
</footer>

const Campo = ({ label, id, alto, children }: { label?: string, id?: string, alto: string, children: ReactNode }) =>
    <div className={clsx("flex items-center", alto)}>
        <label htmlFor={id} className="w-[51px] shrink-0 whitespace-nowrap">{label}</label>
        {children}
    </div>

const Formulario = () => {
    const [opacidad, setOpacidad] = useState<number>(100)

    return <form className="flex-1 min-w-0 pl-1 pr-[9px]" onSubmit={e => e.preventDefault()}>
        <h3 className="h-[11px] leading-[11px]">テキスト</h3>
        <Campo label="フォント" id="フォント" alto="h-[36px]">
            <Desplegable id="フォント" valor="MS UI Gothic" blanco className="flex-1 h-[23px]" />
            <span className="w-2" /><Definido label="フォント" />
        </Campo>
        <Campo label="スタイル" id="スタイル" alto="h-[35px]">
            <Desplegable id="スタイル" valor="標準" className="flex-1 h-[21px]" />
            <span className="w-2" /><Definido label="スタイル" />
        </Campo>
        <Campo alto="h-[26px]">
            <div className="flex-1 flex items-center gap-2 text-sm text-[#555]">
                <button type="button" className={clsx("size-[23px] underline", marco)}>U</button>
                <Definido label="下線" />
                <button type="button" className={clsx("size-[23px] line-through", marco)}>S</button>
                <Definido label="取り消し線" />
                <button type="button" className={clsx("size-[23px] ml-auto text-[#999]", marco)}>B</button>
                <Definido label="太字" />
                <button type="button" className={clsx("size-[23px] italic text-[#666] font-['Liberation_Serif']", marco)}>I</button>
            </div>
            <span className="w-2" /><Definido label="斜体" />
        </Campo>
        <Campo label="大きさ" id="大きさ" alto="h-[34px]">
            <Numero id="大きさ" valor="10.0000" className="flex-1 h-[19px]" />
            <span className="w-2" /><Definido label="大きさ" />
        </Campo>
        <Campo alto="h-[27px]">
            <Desplegable id="単位" valor="ポイント(Points)" className="flex-1 h-[21px]" />
            <span className="w-2" /><Definido label="単位" />
        </Campo>
        <Campo label="色" alto="h-[32px]">
            <button type="button" aria-label="色" className={clsx("flex-1 h-[21px] p-[2px]", marco)}><span className="block h-full rounded-[3px] bg-black" /></button>
            <BotonIcono label="色メニュー" className={clsx("w-[11px] h-[21px] ml-px", marco)}><Flecha className="w-[6px] h-[4px]" /></BotonIcono>
            <span className="w-2" /><Definido label="色" />
        </Campo>
        <Campo label="不透明度" id="opacidad" alto="h-[28px]">
            <input id="opacidad" type="range" min={0} max={100} value={opacidad} onChange={e => setOpacidad(Number(e.target.value))}
                className="flex-1 min-w-0 appearance-none h-[5px] rounded-full bg-[#2f7ac0] border-t border-[#1f5f9d] mr-[4px] [&::-webkit-slider-thumb]:appearance-none [&::-webkit-slider-thumb]:size-3 [&::-webkit-slider-thumb]:rounded-[3px] [&::-webkit-slider-thumb]:bg-white [&::-webkit-slider-thumb]:border [&::-webkit-slider-thumb]:border-[#999]" />
            <Numero id="不透明度の値" valor="100.0 %" className="w-[94px] h-[19px]" />
            <span className="w-2" /><Definido label="不透明度" />
        </Campo>
        <div className="h-[26px] flex items-center"><Casilla>HTMLフォーマットを使う</Casilla></div>
        <div className="h-[32px] flex items-center">
            <div className="flex-1 h-[21px] flex items-center bg-white border border-[#adaeac] rounded-[2px]">
                <span className="pl-[9px] pr-[5px]"><Lupa /></span>
                <input aria-label="お気に入り" defaultValue="お気に入り" className="flex-1 min-w-0 bg-transparent outline-none" />
                <BotonIcono label="消去" className="mr-2"><Svg box="0 0 12 10" className="w-[12px] h-[10px]"><path d="M4 0h8v10H4L0 5z" fill="#8a8b8a" /><path d="M5 3l4 4M9 3L5 7" stroke="#fff" strokeWidth="1.3" /></Svg></BotonIcono>
                <BotonIcono label="一覧" className="w-5 self-stretch border-l border-[#adaeac]"><Flecha /></BotonIcono>
            </div>
            <BotonIcono label="スタイルマネージャ" className="ml-[7px] mr-[2px]"><Svg><circle cx="4.5" cy="4.5" r="3.3" fill="#cd5b3c" /><path d="M9 7l5-6" stroke="#7d8590" strokeWidth="2" /><path d="M1 9.500h6V15H1z" fill="#67a977" /><path d="M9 10.500h4v4h-4v-2h4" stroke="#777" /></Svg></BotonIcono>
        </div>
        <div className="h-[86px] mr-[-3px] bg-white border border-[#adaeac]" />
        <span className="block mt-[5px] w-[19px] h-[4px] rounded-t-[2px] bg-[#d0d1cf]" />
    </form>
}

const Dialogo = () => <section role="dialog" aria-labelledby="dlg" className="absolute left-[175px] top-[40px] w-[778px] h-[617px] flex flex-col bg-[#ebecea] border border-[#5d5e5d] shadow-[2px_3px_16px_rgba(0,0,0,0.5)] text-[#1c1c1c]">
    <header className="h-[28px] shrink-0 flex items-center gap-[5px] pl-2 pr-[7px] bg-white">
        <LogoQ className="size-[15px]" />
        <h1 id="dlg" className="flex-1 font-['Liberation_Sans','Noto_Sans_CJK_JP',sans-serif]">レイヤプロパティ — 594130-20190701-等高線 — ラベル</h1>
        <button type="button" aria-label="閉じる"><X className="size-[15px]" strokeWidth={1.7} /></button>
    </header>
    <div className="flex-1 min-h-0 flex">
        <nav className="w-[141px] shrink-0 flex flex-col bg-[#505050]">
            <label className="h-5 shrink-0 flex items-center pl-2 bg-white border border-[#999]">
                <Lupa />
                <input type="search" aria-label="検索" className="min-w-0 flex-1 bg-transparent outline-none" />
            </label>
            <div className="flex-1 min-h-0 flex pt-[6px]">
                <ul className="flex-1 overflow-hidden text-[#e8e8e8]">
                    {secciones.map(s => <li key={s.nombre}>
                        <button type="button" className={clsx("w-full h-[34px] flex items-center gap-[6px] pl-1 text-left leading-[14px]", s.nombre === "ラベル" && "bg-[#ebecea] text-[#222]")}>
                            <span className="w-[25px] flex justify-center shrink-0">{s.icono}</span>
                            <span className="w-[78px]">{s.nombre}</span>
                        </button>
                    </li>)}
                </ul>
                <Barra pulgar="h-[407px]" />
            </div>
        </nav>
        <div className="flex-1 min-w-0 flex flex-col pl-[4px] pr-[3px] pt-[3px] pb-[2px]">
            <div className="flex gap-2">
                <Desplegable id="ラベルの種類" valor="単一定義(single)" className="flex-1 h-[22px] pl-1">
                    <Svg box="0 0 16 12" className="w-4 h-3"><path d="M1 6l3-4h11v8H4z" fill="#e6e36a" stroke="#a3a04a" /><text x="9" y="8.5" fontSize="6" fontWeight="bold" textAnchor="middle" fill="#555" fontFamily="Liberation Sans">abc</text></Svg>
                </Desplegable>
                <BotonIcono label="自動配置" className={clsx("size-[22px]", marco)}><Svg><path d="M1 4l5-3 5 4-5 5z" fill="#566b82" /><circle cx="10.5" cy="10" r="5" fill="#efd835" stroke="#b79f22" strokeWidth=".7" /><path d="M8 10h5M10.500 7.500v5" stroke="#fff" /></Svg></BotonIcono>
            </div>
            <div className="flex items-center mt-[6px]">
                <label htmlFor="値" className="w-[55px] whitespace-nowrap">値(Value)</label>
                <div className="flex-1 h-[23px] flex items-center bg-white border border-[#6aa5dc] rounded-[2px] shadow-[0_0_1px_1px_#c3ddf3]">
                    <Svg box="0 0 16 12" className="w-4 h-3 ml-[2px] mr-[4px]"><text x="8" y="9" fontSize="7" fontWeight="bold" textAnchor="middle" fill="#777" fontFamily="Liberation Sans">abc</text></Svg>
                    <div className="relative flex-1 h-full">
                        <input id="値" defaultValue="標高" className="w-full h-full bg-transparent outline-none text-xs" />
                        <span className="absolute left-[25px] top-[4px] w-px h-[13px] bg-black" />
                    </div>
                    <BotonIcono label="フィールド一覧" className="w-[19px] self-stretch border-l border-[#adaeac]"><Flecha /></BotonIcono>
                </div>
                <BotonIcono label="式" className={clsx("size-[22px] ml-2", marco)}><Svg className="size-[14px]"><path d="M12 4C9 1 4 2 4.500 5 5 7 7 7.500 9 7.500 5 7.500 3.500 9.500 4.500 12s6 2.500 8 0" stroke="#4d4257" strokeWidth="1.8" /></Svg></BotonIcono>
            </div>
            <h2 className="h-[25px] flex items-center gap-2 pl-[2px] font-bold"><Flecha className="w-[10px] h-[6px]" />テキストの表示例</h2>
            <fieldset className="h-[93px] shrink-0 pt-[4px] px-[2px] border border-[#d3d4d2]">
                <div className="h-[66px] flex bg-white border border-[#b3b4b2]">
                    <p className="flex-1 pl-[9px] pt-[6px]">QGISのラベル機能</p>
                    <Barra pulgar="h-[26px]" />
                </div>
                <div className="flex h-[21px]">
                    <input aria-label="表示例" defaultValue="QGISのラベル機能" className="flex-1 min-w-0 bg-white border border-[#adaeac] pl-px outline-none" />
                    <BotonIcono label="元に戻す" className={clsx("w-[23px]", marco)}><Svg className="size-[14px]"><path d="M1 7l6-5v3c7 0 8 6 4 10 0-4-1-6-4-6v3z" fill="#e0844c" stroke="#b8622f" strokeWidth=".6" /></Svg></BotonIcono>
                    <Desplegable id="プレビュー縮尺" valor="1:28559" blanco className="w-[74px] ml-[5px]" />
                    <BotonIcono label="キャンバス縮尺" className={clsx("w-[23px] ml-[6px]", marco)}><Svg><path d="M1 2h14v10H1z" fill="#9a9c9e" /><path d="M4 2v10M8 2v5" stroke="#ddd" /><path d="M8 5l1 10 2-3 3 3 1-1-2-3 3-1z" fill="#fff" stroke="#333" strokeWidth=".8" /></Svg></BotonIcono>
                    <BotonIcono label="縮尺メニュー" className={clsx("w-[12px]", marco)}><Flecha className="w-[6px] h-[4px]" /></BotonIcono>
                    <button type="button" aria-label="背景色" className={clsx("w-[80px] ml-[6px] p-[2px]", marco)}><span className="block h-full bg-white" /></button>
                    <BotonIcono label="背景色メニュー" className={clsx("w-[12px]", marco)}><Flecha className="w-[6px] h-[4px]" /></BotonIcono>
                </div>
            </fieldset>
            <span className="h-[6px] shrink-0 flex justify-center"><Svg box="0 0 16 4" className="w-4 h-1"><path d="M0 2h16" stroke="#bbb" strokeDasharray="1 2" /></Svg></span>
            <div className="flex-1 min-h-0 flex pl-[2px] overflow-hidden">
                <div className="w-[106px] shrink-0 flex flex-col bg-white border border-[#b3b4b2]">
                    <ul className="flex-1 min-h-0">
                        {opcionesTexto.map(o => <li key={o.nombre} className={clsx("h-[21px] flex items-center gap-[6px] pl-[2px] overflow-hidden whitespace-nowrap", o.nombre === "テキスト" && "bg-[#efefee]")}>{o.icono}{o.nombre}</li>)}
                    </ul>
                    <div className="h-[13px] flex items-center border-t border-[#b3b4b2] bg-[#f8f8f7] px-[3px]">
                        <Svg box="0 0 5 8" className="w-1 h-2"><path d="M5 0L0 4l5 4z" fill="#333" /></Svg>
                        <span className="flex-1" />
                        <span className="w-[27px] h-full bg-[#dddedc] mr-1" />
                        <Svg box="0 0 5 8" className="w-1 h-2"><path d="M0 0l5 4-5 4z" fill="#333" /></Svg>
                    </div>
                </div>
                <Formulario />
                <Barra pulgar="h-[341px]" />
            </div>
            <footer className="h-[25px] shrink-0 flex items-end gap-2">
                <button type="button" className={clsx("w-[75px] h-[21px] mr-auto flex items-center justify-center gap-4", marco)}>スタイル<Flecha /></button>
                <button type="button" className={clsx("w-[73px] h-[21px] outline outline-[#4fb3c9]", marco)}>OK</button>
                <button type="button" className={clsx("w-[73px] h-[21px]", marco)}>キャンセル</button>
                <button type="button" className={clsx("w-[73px] h-[21px]", marco)}>適用</button>
                <button type="button" className={clsx("w-[74px] h-[21px]", marco)}>ヘルプ</button>
            </footer>
        </div>
    </div>
</section>

const App = () => <div className="relative h-screen flex flex-col py-[15px] bg-black overflow-hidden text-[11px] font-['Open_Sans','Noto_Sans_CJK_JP',sans-serif] [font-feature-settings:'palt']">
    <div className="flex-1 min-h-0 flex flex-col bg-[#ebecea]">
        <header className="h-[22px] shrink-0 flex items-center gap-[6px] bg-white text-[#8d8e8d]">
            <LogoQ className="size-[14px]" />
            <h1 className="flex-1">*無題のプロジェクト — QGIS</h1>
            <button type="button" aria-label="最小化" className="mr-[23px]"><Minus className="size-[14px]" strokeWidth={1.5} /></button>
            <button type="button" aria-label="元のサイズ" className="mr-[24px]"><Svg box="0 0 12 12" className="size-3"><path d="M1.500 3.500h7v7h-7zM3.500 3.500v-2h7v7h-2" stroke="#888" /></Svg></button>
            <button type="button" aria-label="閉じる" className="mr-[14px]"><X className="size-[14px]" strokeWidth={1.5} /></button>
        </header>
        <nav className="h-[18px] box-content shrink-0 flex items-center gap-[14px] px-[7px] border-b border-[#c3c4c2] text-[10px] text-[#a3a4a3]">
            <a href="#project">プロジェクト(<u>J</u>)</a>
            <a href="#edit">編集(<u>E</u>)</a>
            <a href="#view">ビュー(<u>V</u>)</a>
        </nav>
        <Herramientas />
        <div className="flex-1 min-h-0 flex">
            <PanelIzquierdo />
            <span className="w-[5px] shrink-0" />
            <Mapa />
            <PanelDerecho />
        </div>
        <BarraEstado />
        <span className="h-[3px] shrink-0 bg-[#3c403f]" />
    </div>
    <Dialogo />
    <div className="absolute inset-x-0 bottom-[15px] h-[82px] pl-[75px] bg-black/56 pointer-events-none [font-feature-settings:normal]">
        <p className="text-white text-4xl font-light leading-[76px] whitespace-nowrap font-['Liberation_Sans','Noto_Sans_CJK_JP',sans-serif]">’なし’→’単一定義 →’値’で表示したい項目を選ぶ。</p>
    </div>
    <Svg box="0 0 12 18" className="absolute left-[536px] top-[253px] w-3 h-[18px]">
        <path d="M1 1v14l3.500-3 2 5 2.500-1-2-5h4z" fill="#fff" stroke="#333" />
    </Svg>
</div>

export default App
